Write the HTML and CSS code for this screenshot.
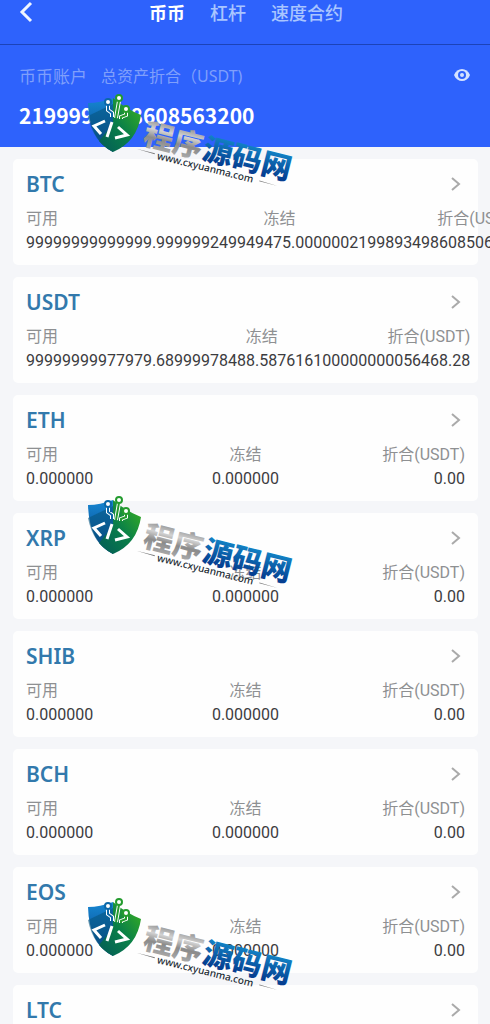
FILE: index.html
```html
<!DOCTYPE html>
<html lang="zh-CN">
<head>
<meta charset="utf-8">
<meta name="viewport" content="width=device-width, initial-scale=1">
<title>币币账户</title>
<link rel="stylesheet" href="styles.css">
</head>
<body>
<svg class="defs" aria-hidden="true">
  <defs>
    <linearGradient id="blue" x1="0" y1="0" x2="0" y2="1"><stop offset="0" stop-color="#1687d2"/><stop offset="1" stop-color="#063c83"/></linearGradient>
    <linearGradient id="green" x1="0" y1="1" x2="1" y2="0"><stop offset="0" stop-color="#035a58"/><stop offset=".5" stop-color="#0a8048"/><stop offset="1" stop-color="#3eb51d"/></linearGradient>
    <linearGradient id="silver" x1="0" y1="0" x2="0" y2="1"><stop offset=".1" stop-color="#777"/><stop offset=".4" stop-color="#d2d2d2"/><stop offset=".6" stop-color="#8b8b8b"/><stop offset="1" stop-color="#b8b8b8"/></linearGradient>
    <linearGradient id="azure" x1="0" y1="0" x2="0" y2="1"><stop offset=".1" stop-color="#1591d0"/><stop offset=".8" stop-color="#053f91"/></linearGradient>
    <symbol id="brand" viewBox="0 0 220 110" overflow="visible">
      <path d="M4 19Q16 19 29 14V68Q5 56 4 19Z" fill="url(#blue)"/>
      <path d="M4 32L29 20V68Q9 58 4 32Z" fill="#06557f" opacity=".6"/>
      <path d="M29 14Q42 25 57 31Q53 58 29 68Q20 63 15 57L29 40Z" fill="url(#green)"/>
      <path d="M24 21V26L28 29V33M35 17L32 34M42 28V31L37 33V35" fill="none" stroke="#fff" stroke-width="4"/>
      <path d="M24 21V26L28 29V33" fill="none" stroke="#0b68a8" stroke-width="2"/>
      <path d="M35 17L32 34M42 28V31L37 33V35" fill="none" stroke="#249b2e" stroke-width="2"/>
      <circle cx="24" cy="18" r="3" fill="#fff" stroke="#0b68a8" stroke-width="2"/>
      <circle cx="35" cy="14" r="3" fill="#fff" stroke="#249b2e" stroke-width="2"/>
      <circle cx="42" cy="25" r="3" fill="#fff" stroke="#249b2e" stroke-width="2"/>
      <path d="M21 37L10 42L17 50M28 38L23 53M34 43L43 51L31 54" fill="none" stroke="#fff" stroke-width="3"/>
      <g transform="translate(59 55) rotate(14)">
        <text class="brand-name" x="0" y="5" fill="url(#silver)">程序</text>
        <text class="brand-name" x="61" y="5" fill="url(#azure)">源码网</text>
        <text class="brand-site" x="18" y="16">www.cxyuanma.com</text>
        <path d="M-4 11L15 11V12ZM123 12V13L142 13Z" fill="#777"/>
      </g>
    </symbol>
  </defs>
</svg>
<header class="top">
  <nav class="nav">
    <button class="back" aria-label="返回"><svg viewBox="0 0 14 22"><path d="M12 2L3 11L12 20"/></svg></button>
    <a class="tab active" href="#spot">币币</a>
    <a class="tab" href="#margin">杠杆</a>
    <a class="tab" href="#contract">速度合约</a>
  </nav>
  <section class="summary">
    <div class="summary-head">
      <h1 class="account">币币账户</h1>
      <span class="caption">总资产折合（USDT)</span>
      <button class="eye" aria-label="隐藏资产"><svg viewBox="0 0 18 14"><path d="M1 7C4 -1 14 -1 17 7C14 15 4 15 1 7Z" fill="#d5e2ff"/><circle cx="9" cy="7" r="4" fill="#2f63fb"/><circle cx="9" cy="7" r="2" fill="#d5e2ff"/></svg></button>
    </div>
    <p class="total">2199998938608563200</p>
  </section>
</header>
<main class="list" id="list"></main>
<div class="marks" aria-hidden="true">
  <svg class="mark"><use href="#brand"/></svg>
  <svg class="mark"><use href="#brand"/></svg>
  <svg class="mark"><use href="#brand"/></svg>
</div>
<script src="app.js"></script>
</body>
</html>
```
FILE: styles.css
```css
* { box-sizing: border-box; }
body { margin: 0; height: 100vh; overflow: hidden; position: relative; background: #f5f6f9; color: #3c3c3f; font-family: "Noto Sans", "Noto Sans CJK SC", sans-serif; }
h1, h2, p, dl, dd { margin: 0; }
button { padding: 0; border: 0; background: none; }
svg { display: block; }
.defs { position: absolute; width: 0; height: 0; }
.top { background: #2e62fc; padding-bottom: 16px; }
.nav { display: flex; align-items: flex-start; height: 45px; padding-left: 19px; border-bottom: 1px solid #1c43b8; }
.back { width: 130px; }
.back svg { width: 14px; height: 24px; fill: none; stroke: #f0f5ff; stroke-width: 3; }
.tab { margin-right: 25px; color: #a9c5ff; font-size: 18px; line-height: 26px; font-weight: 500; text-decoration: none; }
.tab.active { color: #fff; font-weight: 700; }
.summary { padding: 18px 19px 0; }
.summary-head { display: flex; align-items: center; height: 24px; color: #7f9ffb; }
.account { font-size: 17px; font-weight: 400; margin-right: 14px; }
.caption { font-size: 16px; }
.eye { margin-left: auto; }
.eye svg { width: 18px; height: 14px; }
.total { margin-top: 12px; color: #fff; font-size: 21px; line-height: 32px; font-weight: 700; font-family: "Noto Sans CJK SC", sans-serif; }
.list { display: grid; grid-template-columns: minmax(0, 1fr); gap: 12px; padding: 12px 12px 0 13px; }
.card { padding: 12px 13px 10px; background: #fefefe; border-radius: 5px; }
.card-head { display: flex; justify-content: space-between; align-items: center; height: 26px; }
.coin { color: #3279ac; font-size: 21px; line-height: 26px; font-weight: 600; }
.chevron { width: 10px; height: 16px; margin-right: 4px; fill: none; stroke: #aaa; stroke-width: 2; }
.amounts { display: flex; margin-top: 10px; font-family: Roboto, "Noto Sans CJK SC", sans-serif; font-size: 16px; line-height: 24px; }
.amount { flex: 1; text-align: center; }
.amount:first-child { text-align: left; }
.amount:last-child { text-align: right; }
.label { color: #8e9092; }
.marks { position: absolute; inset: 84px auto auto 84px; display: grid; gap: 292px; pointer-events: none; }
.mark { width: 220px; height: 110px; overflow: visible; }
.brand-name { font: 900 30px "Noto Sans CJK SC", sans-serif; }
.brand-site { font: 500 10px "Noto Sans", sans-serif; fill: #222b33; }
```
FILE: app.js
```js
const zero = ["0.000000", "0.000000", "0.00"];
const coins = [
  ["BTC", ["99999999999999.999999", "249949475.000000", "2199893498608506320"]],
  ["USDT", ["99999999977979.689999", "78488.587616", "100000000056468.28"]],
  ["ETH", zero], ["XRP", zero], ["SHIB", zero], ["BCH", zero], ["EOS", zero], ["LTC", zero]
];
const labels = ["可用", "冻结", "折合(USDT)"];
document.getElementById("list").innerHTML = coins.map(([name, values]) => `
  <article class="card">
    <div class="card-head">
      <h2 class="coin">${name}</h2>
      <svg class="chevron" viewBox="0 0 10 16"><path d="M1 2L8 8L1 14"/></svg>
    </div>
    <dl class="amounts">
      ${values.map((v, i) => `<div class="amount"><dt class="label">${labels[i]}</dt><dd class="value">${v}</dd></div>`).join("")}
    </dl>
  </article>`).join("");
```
